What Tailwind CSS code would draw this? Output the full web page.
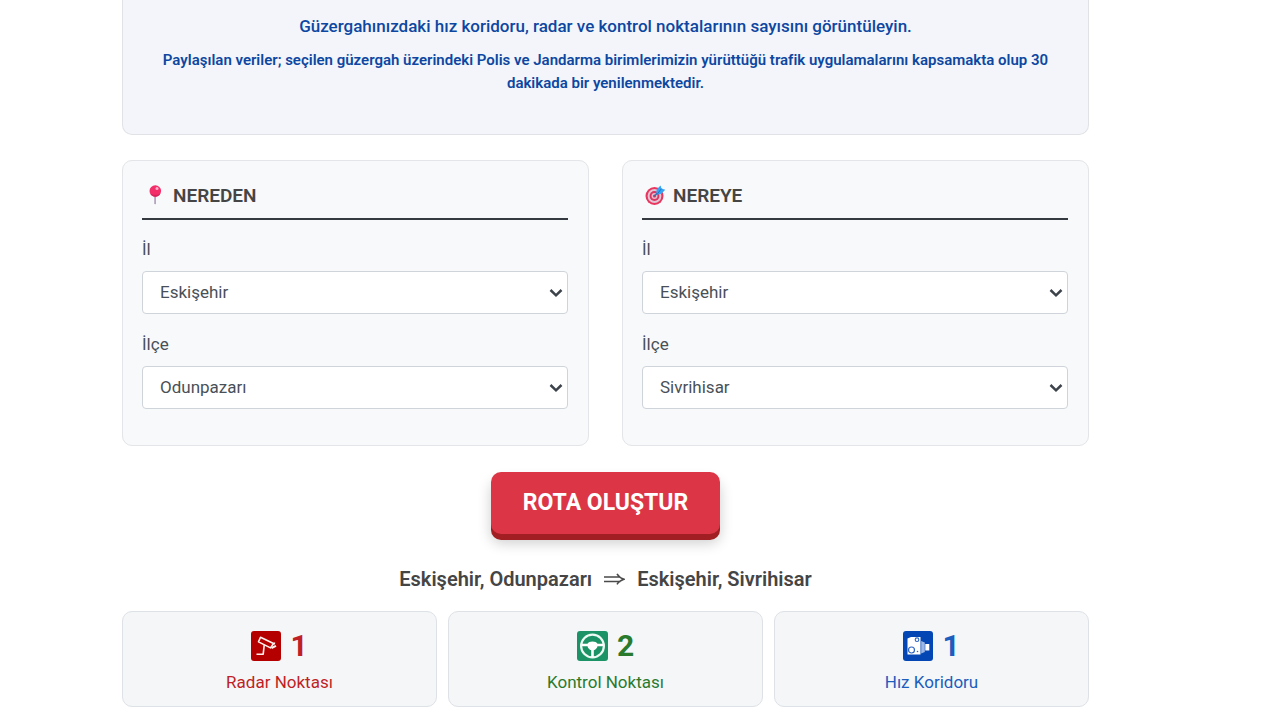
<!DOCTYPE html>
<html lang="tr">
<head>
<meta charset="utf-8">
<meta name="viewport" content="width=device-width, initial-scale=1">
<title>Rota Oluştur</title>
<script src="https://cdn.jsdelivr.net/npm/@tailwindcss/browser@4"></script>
</head>
<body class="bg-white font-['Roboto',sans-serif] text-[#495057] overflow-x-hidden">
<main class="pl-[122px] pr-[191px] pb-[13px]">
  <section class="rounded-b-[10px] border border-t-0 border-[#e0e2e6] bg-[#f3f5fa] px-5 pt-[13px] pb-[39px] text-center text-[#0d47a1]">
    <p class="text-[17px] leading-[26px] font-medium">Güzergahınızdaki hız koridoru, radar ve kontrol noktalarının sayısını görüntüleyin.</p>
    <p class="mt-[10px] text-[15px] leading-[23px] font-semibold">Paylaşılan veriler; seçilen güzergah üzerindeki Polis ve Jandarma birimlerimizin yürüttüğü trafik uygulamalarını kapsamakta olup 30 dakikada bir yenilenmektedir.</p>
  </section>

  <form>
    <div class="mt-[25px] grid grid-cols-2 gap-[33px]">
      <fieldset class="rounded-[10px] border border-[#e3e5e8] bg-[#f8f9fb] pt-5 pr-5 pb-9 pl-[19px]">
        <h2 class="flex h-[39px] items-start gap-[7px] border-b-2 border-[#343a40] pl-[2px] text-[19px] leading-[30px] font-semibold text-[#454545]">
          <svg class="mt-[4px] h-[22px] w-[22px]" viewBox="0 0 22 22" aria-hidden="true"><path d="M10.200 10h1.800v8.300l-.9 1.200-.9-1.200z" fill="#b3a6c0"/><circle cx="11.300" cy="6" r="5.800" fill="#f22f68"/><path d="M6 8.300a5.800 5.800 0 0 0 10.600 0c-2.500 2-8 2-10.600 0z" fill="#d6245c"/><circle cx="13" cy="3.600" r="1.500" fill="#ffb0cc"/></svg>
          NEREDEN
        </h2>
        <label for="il1" class="mt-4 block text-[17px] leading-[26px]">İl</label>
        <div class="relative mt-[9px]">
          <select id="il1" class="block h-[43px] w-full appearance-none rounded-[4px] border border-[#ced4da] bg-white pl-[17px] text-[17px] text-[#495057]"><option>Eskişehir</option></select>
          <svg class="pointer-events-none absolute top-[17px] right-[5px] h-[10px] w-[14px]" viewBox="0 0 14 10" fill="none" stroke="#3c434a" stroke-width="2.500" aria-hidden="true"><path d="M1.500 2 7 7.300 12.500 2"/></svg>
        </div>
        <label for="ilce1" class="mt-[17px] block text-[17px] leading-[26px]">İlçe</label>
        <div class="relative mt-[9px]">
          <select id="ilce1" class="block h-[43px] w-full appearance-none rounded-[4px] border border-[#ced4da] bg-white pl-[17px] text-[17px] text-[#495057]"><option>Odunpazarı</option></select>
          <svg class="pointer-events-none absolute top-[17px] right-[5px] h-[10px] w-[14px]" viewBox="0 0 14 10" fill="none" stroke="#3c434a" stroke-width="2.500" aria-hidden="true"><path d="M1.500 2 7 7.300 12.500 2"/></svg>
        </div>
      </fieldset>
      <fieldset class="rounded-[10px] border border-[#e3e5e8] bg-[#f8f9fb] pt-5 pr-5 pb-9 pl-[19px]">
        <h2 class="flex h-[39px] items-start gap-[7px] border-b-2 border-[#343a40] pl-[2px] text-[19px] leading-[30px] font-semibold text-[#454545]">
          <svg class="mt-[4px] h-[22px] w-[22px]" viewBox="0 0 22 22" aria-hidden="true"><circle cx="10.500" cy="11" r="9" fill="#e8365f"/><circle cx="10.500" cy="11" r="6.900" fill="#dfc6d4"/><circle cx="10.500" cy="11" r="4.900" fill="#de3461"/><circle cx="10.500" cy="11" r="3" fill="#e4bccb"/><circle cx="10.500" cy="11" r="1.500" fill="#cf315d"/><path d="m10.500 11 6-6" stroke="#2173bd" stroke-width="1.500"/><path d="m12.300 7.800.5-3.500L16.500.5l1 3 3.700 1.200-3.700 4-3.600.9z" fill="#36a4f4"/><path d="m13.500 8.700 4-5" stroke="#1976c5"/></svg>
          NEREYE
        </h2>
        <label for="il2" class="mt-4 block text-[17px] leading-[26px]">İl</label>
        <div class="relative mt-[9px]">
          <select id="il2" class="block h-[43px] w-full appearance-none rounded-[4px] border border-[#ced4da] bg-white pl-[17px] text-[17px] text-[#495057]"><option>Eskişehir</option></select>
          <svg class="pointer-events-none absolute top-[17px] right-[5px] h-[10px] w-[14px]" viewBox="0 0 14 10" fill="none" stroke="#3c434a" stroke-width="2.500" aria-hidden="true"><path d="M1.500 2 7 7.300 12.500 2"/></svg>
        </div>
        <label for="ilce2" class="mt-[17px] block text-[17px] leading-[26px]">İlçe</label>
        <div class="relative mt-[9px]">
          <select id="ilce2" class="block h-[43px] w-full appearance-none rounded-[4px] border border-[#ced4da] bg-white pl-[17px] text-[17px] text-[#495057]"><option>Sivrihisar</option></select>
          <svg class="pointer-events-none absolute top-[17px] right-[5px] h-[10px] w-[14px]" viewBox="0 0 14 10" fill="none" stroke="#3c434a" stroke-width="2.500" aria-hidden="true"><path d="M1.500 2 7 7.300 12.500 2"/></svg>
        </div>
      </fieldset>
    </div>
    <div class="mt-[26px] flex justify-center">
      <button type="button" class="rounded-[10px] bg-[#dc3545] px-8 py-[15px] text-[23px] leading-[32px] font-bold text-white shadow-[0_6px_0_#a11f22,0_9px_14px_rgba(0,0,0,0.2)]">ROTA OLUŞTUR</button>
    </div>
  </form>

  <section>
    <h3 class="mt-[30px] flex items-center justify-center gap-3 text-[20px] leading-[30px] font-semibold text-[#454545]">
      <span>Eskişehir, Odunpazarı</span>
      <svg class="h-[12px] w-[21px]" viewBox="0 0 21 12" fill="none" stroke="#4a4a4a" stroke-width="1.500" role="img" aria-label="varış"><path d="M0 4h16.500M0 8.500h16.500M13 .8C14.500 3.500 17 5.200 20 6.200c-3 1-5.500 2.500-7 5.200"/></svg>
      <span>Eskişehir, Sivrihisar</span>
    </h3>
    <div class="mt-[17px] grid grid-cols-3 gap-[11px] text-center">
      <article class="rounded-[10px] border border-[#dee2e6] bg-[#f4f6f8] px-4 pt-[15px] pb-[11px] text-[#c01f25]">
        <div class="flex h-[38px] items-center justify-center gap-[9px] text-[30px] leading-[36px] font-bold">
          <svg class="h-[30px] w-[30px]" viewBox="0 0 30 30" aria-hidden="true"><rect width="30" height="30" rx="3" fill="#b50000"/><g fill="none" stroke="#fff2ee" stroke-width="1.600" stroke-linejoin="round"><path d="m9.500 6.300 13 6.200-3 4.400-12-6z"/><path d="m13.200 14-1 9.200H5.500"/></g><path d="m20.500 17 4.500-2.200M22.500 12.200l1.500.6" stroke="#fff2ee" stroke-width="2"/></svg>
          <span>1</span>
        </div>
        <p class="mt-1 text-[17px] leading-[26px]">Radar Noktası</p>
      </article>
      <article class="rounded-[10px] border border-[#dee2e6] bg-[#f4f6f8] px-4 pt-[15px] pb-[11px] text-[#2a7a2e]">
        <div class="flex h-[38px] items-center justify-center gap-[9px] text-[30px] leading-[36px] font-bold">
          <svg class="h-[30px] w-[31px]" viewBox="0 0 31 30" aria-hidden="true"><rect width="31" height="30" rx="3" fill="#1c9366"/><circle cx="15.500" cy="15" r="11.400" fill="none" stroke="#edfaf5" stroke-width="2.200"/><path d="M5 12.700h5.500c1.500-2.800 8.500-2.800 10 0H26v2.600h-5.500c-.5 2-2 3.500-3.700 4V26h-2.600v-6.700c-1.700-.5-3.200-2-3.700-4H5z" fill="#fff"/></svg>
          <span>2</span>
        </div>
        <p class="mt-1 text-[17px] leading-[26px]">Kontrol Noktası</p>
      </article>
      <article class="rounded-[10px] border border-[#dee2e6] bg-[#f4f6f8] px-4 pt-[15px] pb-[11px] text-[#1c5dbd]">
        <div class="flex h-[38px] items-center justify-center gap-[9px] text-[30px] leading-[36px] font-bold">
          <svg class="h-[30px] w-[30px]" viewBox="0 0 30 30" aria-hidden="true"><rect width="30" height="30" rx="3" fill="#0446b3"/><path d="M4.500 7.500 8 6h9.500v17.500h-13z" fill="#fff"/><path d="m18.200 10 3.600 1.500v9.500l-3.600 1.500z" fill="#9db8e6"/><path d="M22.300 13h4v6.500h-4z" fill="#fff"/><circle cx="8.500" cy="19" r="3" fill="#fff" stroke="#2f66c0" stroke-width="1.200"/><circle cx="14" cy="8.700" r="1.800" fill="#fff" stroke="#2f66c0" stroke-width="1.100"/><circle cx="14.500" cy="20.500" r=".8" fill="#2f66c0"/></svg>
          <span>1</span>
        </div>
        <p class="mt-1 text-[17px] leading-[26px]">Hız Koridoru</p>
      </article>
    </div>
  </section>
</main>
</body>
</html>
